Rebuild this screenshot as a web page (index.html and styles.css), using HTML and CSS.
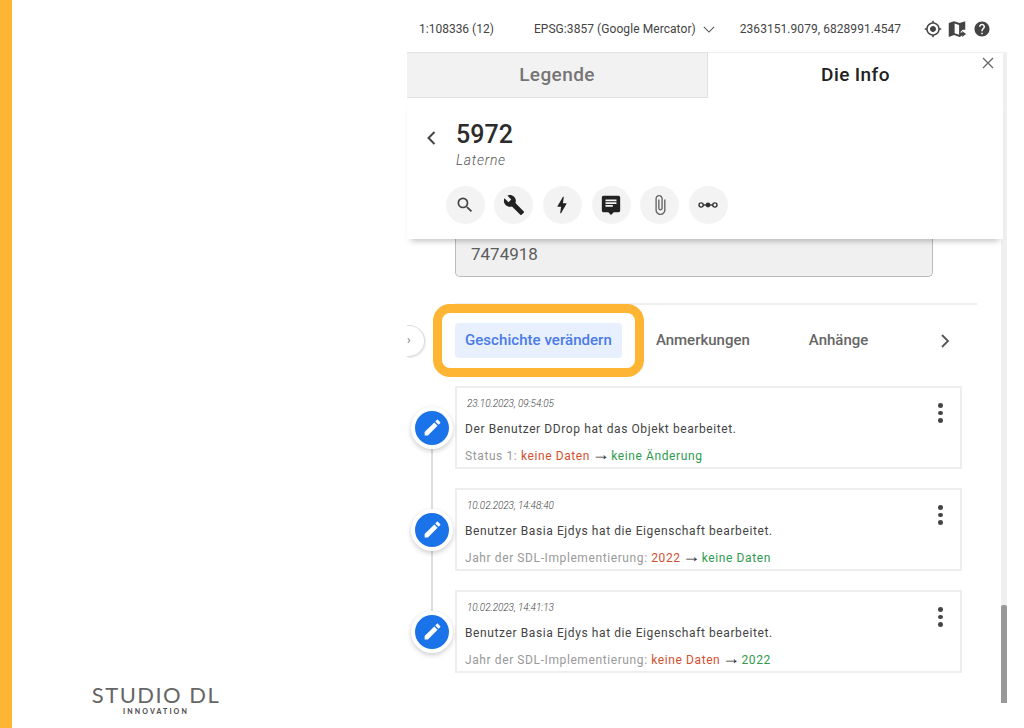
FILE: index.html
```html
<!DOCTYPE html>
<html lang="de">
<head>
<meta charset="utf-8">
<title>Geschichte verändern</title>
<link rel="stylesheet" href="styles.css">
</head>
<body>
<div class="page">
  <div class="stripe"></div>
  <div class="left">
    <div class="logo">
      <div class="logo-main">STUDIO DL</div>
      <div class="logo-sub">INNOVATION</div>
    </div>
  </div>
  <div class="right">
    <div class="status">
      <span class="scale">1:108336 (12)</span>
      <span class="crs">EPSG:3857 (Google Mercator)</span>
      <svg class="crs-chev" viewBox="0 0 14 8"><path d="M1 1l6 6 6-6" fill="none" stroke="#555" stroke-width="1.3"/></svg>
      <span class="coords">2363151.9079, 6828991.4547</span>
      <svg class="st-icon first" viewBox="0 0 24 24"><path d="M12 8c-2.21 0-4 1.79-4 4s1.79 4 4 4 4-1.79 4-4-1.79-4-4-4zm8.94 3c-.46-4.17-3.77-7.48-7.94-7.94V1h-2v2.06C6.83 3.52 3.52 6.83 3.06 11H1v2h2.06c.46 4.17 3.77 7.48 7.94 7.94V23h2v-2.06c4.17-.46 7.48-3.77 7.94-7.94H23v-2h-2.06zM12 19c-3.87 0-7-3.13-7-7s3.13-7 7-7 7 3.13 7 7-3.13 7-7 7z"/></svg>
      <svg class="st-icon map" viewBox="0 0 24 24"><path d="M1 4L8 1.500l7.500 2.500L23 1.500V13h-3.500l-3.500 3.500 2.500 0V21L15.500 22.500 8 20l-7 2.500zM8.800 4.500v13l6 2V6.500z" fill-rule="evenodd"/><path d="M19 14.500l5 4-5 4V20h-2.500v-3H19z"/></svg>
      <svg class="st-icon" viewBox="0 0 24 24"><path d="M12 2C6.48 2 2 6.480 2 12s4.480 10 10 10 10-4.480 10-10S17.520 2 12 2zm1 17h-2v-2h2v2zm2.070-7.750l-.9.92C13.450 12.900 13 13.500 13 15h-2v-.5c0-1.100.45-2.100 1.170-2.830l1.240-1.260c.37-.36.59-.86.59-1.410 0-1.100-.9-2-2-2s-2 .9-2 2H8c0-2.210 1.790-4 4-4s4 1.790 4 4c0 .88-.36 1.680-.93 2.250z"/></svg>
    </div>
    <div class="panel">
      <div class="panel-main">
        <div class="panel-tabs">
          <div class="ptab ptab-off">Legende</div>
          <div class="ptab ptab-on">Die Info</div>
          <svg class="close" viewBox="0 0 12 12"><path d="M1 1l10 10M11 1L1 11" stroke="#666" stroke-width="1.300" fill="none"/></svg>
        </div>
        <div class="head">
          <div class="head-top">
            <svg class="back" viewBox="0 0 10 16"><path d="M8.500 2L2.500 8l6 6" fill="none" stroke="#444" stroke-width="2"/></svg>
            <div>
              <div class="title">5972</div>
              <div class="subtitle">Laterne</div>
            </div>
          </div>
          <div class="actions">
            <div class="act"><svg class="i20" viewBox="0 0 24 24"><path fill="#444" d="M15.500 14h-.79l-.28-.27A6.470 6.470 0 0 0 16 9.500 6.500 6.500 0 1 0 9.500 16c1.610 0 3.090-.59 4.230-1.570l.27.28v.79l5 4.990L20.490 19l-4.990-5zm-6 0C7.010 14 5 11.990 5 9.500S7.010 5 9.500 5 14 7.010 14 9.500 11.990 14 9.500 14z"/></svg></div>
            <div class="act"><svg class="i22" viewBox="0 0 24 24"><path fill="#222" d="M22.700 19l-9.100-9.100c.9-2.300.4-5-1.500-6.900-2-2-5-2.400-7.400-1.300L9 6 6 9 1.600 4.700C.4 7.100.9 10.100 2.900 12.100c1.900 1.900 4.600 2.400 6.900 1.500l9.100 9.100c.4.4 1 .4 1.400 0l2.300-2.300c.5-.4.5-1.100.1-1.400z"/></svg></div>
            <div class="act"><svg class="i22" viewBox="0 0 24 24"><path fill="#222" d="M11 21h-1l1-7H7.500c-.88 0-.33-.75-.31-.78C8.480 10.940 10.420 7.540 13.010 3h1l-1 7h3.510c.4 0 .62.19.4.66C12.970 17.550 11 21 11 21z"/></svg></div>
            <div class="act"><svg class="i22" viewBox="0 0 24 24"><path fill="#222" d="M20 2H4c-1.100 0-1.990.9-1.990 2L2 18c0 1.100.9 2 2 2h5l3 3 3-3h5c1.100 0 2-.9 2-2V4c0-1.100-.9-2-2-2zM6 9h12v2H6V9zm8 5H6v-2h8v2zm4-6H6V6h12v2z"/></svg></div>
            <div class="act"><svg class="i22" viewBox="0 0 24 24"><path fill="#666" d="M16.500 6v11.500c0 2.210-1.790 4-4 4s-4-1.790-4-4V5c0-1.380 1.120-2.500 2.500-2.500s2.500 1.120 2.500 2.500v10.500c0 .55-.45 1-1 1s-1-.45-1-1V6H10v9.500c0 1.380 1.120 2.500 2.500 2.500s2.500-1.120 2.500-2.500V5c0-2.210-1.790-4-4-4S7 2.790 7 5v12.500c0 3.040 2.460 5.500 5.500 5.500s5.500-2.460 5.500-5.500V6h-1.500z"/></svg></div>
            <div class="act"><svg class="i22" viewBox="0 0 24 24"><path d="M5 12h14" stroke="#333" stroke-width="1.500"/><circle cx="4.500" cy="12" r="2.300" fill="#f3f3f3" stroke="#333" stroke-width="1.500"/><circle cx="12" cy="12" r="2.600" fill="#333"/><circle cx="19.500" cy="12" r="2.300" fill="#f3f3f3" stroke="#333" stroke-width="1.500"/></svg></div>
          </div>
        </div>
        <div class="field">7474918</div>
        <div class="divider"></div>
        <div class="tabs">
          <div class="toggle">›</div>
          <div class="tab tab-active">Geschichte verändern<span class="ring"></span></div>
          <div class="tab">Anmerkungen</div>
          <div class="tab tab-third">Anhänge</div>
          <svg class="next" viewBox="0 0 10 16"><path d="M2 2l6 6-6 6" fill="none" stroke="#555" stroke-width="1.800"/></svg>
        </div>
        <div class="timeline">
          <div class="entry">
            <div class="marker"><svg viewBox="0 0 24 24"><path fill="#fff" d="M3 17.250V21h3.750L17.810 9.940l-3.750-3.750L3 17.250zM20.710 7.040c.39-.39.39-1.020 0-1.410l-2.340-2.340c-.39-.39-1.020-.39-1.410 0l-1.830 1.830 3.750 3.750 1.830-1.830z"/></svg></div>
            <div class="card">
              <div class="date">23.10.2023, 09:54:05</div>
              <div class="msg">Der Benutzer DDrop hat das Objekt bearbeitet.</div>
              <div class="chg">Status 1: <span class="old">keine Daten</span> <span class="arrow">→</span> <span class="new">keine Änderung</span></div>
              <div class="dots"><i></i><i></i><i></i></div>
            </div>
          </div>
          <div class="entry">
            <div class="marker"><svg viewBox="0 0 24 24"><path fill="#fff" d="M3 17.250V21h3.750L17.810 9.940l-3.750-3.750L3 17.250zM20.710 7.040c.39-.39.39-1.020 0-1.410l-2.340-2.340c-.39-.39-1.020-.39-1.410 0l-1.830 1.830 3.750 3.750 1.830-1.830z"/></svg></div>
            <div class="card">
              <div class="date">10.02.2023, 14:48:40</div>
              <div class="msg">Benutzer Basia Ejdys hat die Eigenschaft bearbeitet.</div>
              <div class="chg">Jahr der SDL-Implementierung: <span class="old">2022</span> <span class="arrow">→</span> <span class="new">keine Daten</span></div>
              <div class="dots"><i></i><i></i><i></i></div>
            </div>
          </div>
          <div class="entry">
            <div class="marker"><svg viewBox="0 0 24 24"><path fill="#fff" d="M3 17.250V21h3.750L17.810 9.940l-3.750-3.750L3 17.250zM20.710 7.040c.39-.39.39-1.020 0-1.410l-2.340-2.340c-.39-.39-1.020-.39-1.410 0l-1.830 1.830 3.750 3.750 1.830-1.830z"/></svg></div>
            <div class="card">
              <div class="date">10.02.2023, 14:41:13</div>
              <div class="msg">Benutzer Basia Ejdys hat die Eigenschaft bearbeitet.</div>
              <div class="chg">Jahr der SDL-Implementierung: <span class="old">keine Daten</span> <span class="arrow">→</span> <span class="new">2022</span></div>
              <div class="dots"><i></i><i></i><i></i></div>
            </div>
          </div>
        </div>
      </div>
      <div class="scrollbar"><div class="thumb"></div></div>
    </div>
  </div>
</div>
</body>
</html>
```
FILE: styles.css
```css
* { box-sizing: border-box; }
html, body { margin: 0; padding: 0; background: #fff; }
body { font-family: Roboto, "Liberation Sans", sans-serif; color: #444; }
.page { display: flex; width: 1024px; height: 728px; overflow: hidden; }
.stripe { width: 12px; background: #ffb534; flex: none; }

.left { width: 395px; flex: none; display: flex; flex-direction: column; justify-content: flex-end; padding: 0 0 13px 80px; }
.logo { width: 128px; display: flex; flex-direction: column; align-items: center; color: #666; }
.logo-main { font-family: Lato, sans-serif; font-weight: 400; font-size: 22px; line-height: 22px; letter-spacing: 1.450px; white-space: nowrap; }
.logo-sub { font-family: Lato, sans-serif; font-weight: 900; font-size: 7px; line-height: 8px; letter-spacing: 2.100px; margin-top: 1px; color: #555; }

.right { width: 617px; flex: none; display: flex; flex-direction: column; }
.status { height: 52px; flex: none; display: flex; align-items: center; padding: 6px 0 0 12px; font-size: 12px; color: #444; white-space: nowrap; }
.crs { margin-left: 40px; letter-spacing: .07px; }
.crs-chev { width: 12px; height: 7px; margin-left: 7px; }
.coords { margin-left: 25px; letter-spacing: .05px; }
.st-icon { width: 18px; height: 18px; fill: #444; margin-left: 7px; }
.st-icon.first { margin-left: 23px; }
.st-icon.map { margin-left: 6px; }

.panel { width: 600px; height: 651px; flex: none; display: flex; }
.panel-main { width: 596px; flex: none; display: flex; flex-direction: column; }
.scrollbar { width: 6px; margin-left: -2px; background: #f0f0f0; display: flex; flex-direction: column; justify-content: flex-end; }
.thumb { height: 98px; background: #999; border-radius: 2px 2px 0 0; }

.panel-tabs { position: relative; display: flex; height: 46px; flex: none; font-size: 19px; font-weight: 500; letter-spacing: .4px; background: #fff; }
.ptab { display: flex; align-items: center; justify-content: center; padding-bottom: 2px; }
.ptab-off { width: 301px; background: #f2f2f2; color: #757575; border: 1px solid #e2e2e2; border-left: 0; }
.ptab-on { width: 295px; color: #222; border-top: 1px solid #eee; }
.close { position: absolute; top: 5px; right: 9px; width: 12px; height: 12px; }

.head { position: relative; z-index: 2; height: 141px; flex: none; background: #fff; box-shadow: 0 6px 6px -4px rgba(0,0,0,.25); padding-top: 22px; }
.head-top { display: flex; align-items: flex-start; padding-left: 19px; }
.back { width: 10px; height: 16px; margin: 10px 20px 0 0; }
.title { font-size: 25px; font-weight: 500; line-height: 30px; color: #2c2c2c; }
.subtitle { font-size: 14px; font-weight: 300; font-style: italic; line-height: 20px; color: #555; letter-spacing: .7px; }
.actions { display: flex; gap: 9.700px; margin: 16px 0 0 38.500px; }
.act { width: 39px; height: 38px; border-radius: 50%; background: #f3f3f3; display: flex; align-items: center; justify-content: center; }
.i20 { width: 20px; height: 20px; }
.i22 { width: 22px; height: 22px; }

.field { height: 38px; flex: none; margin-left: 48px; width: 478px; background: #f0f0f0; border: 1px solid #bbb; border-top: 0; border-radius: 0 0 5px 5px; padding: 5px 0 0 15px; font-size: 17px; line-height: 20px; color: #5c5c5c; }
.divider { height: 2px; flex: none; margin: 26px 0 0 48px; width: 522px; background: #eee; }

.tabs { display: flex; align-items: center; height: 35px; flex: none; margin-top: 18px; font-size: 15px; font-weight: 500; color: #666; }
.toggle { width: 18px; height: 32px; border-radius: 0 16px 16px 0; background: #fff; border: 1px solid #ddd; border-left: 0; box-shadow: 1px 1px 1px rgba(0,0,0,.08); font-size: 12px; line-height: 28px; color: #888; flex: none; margin-right: 30px; }
.tab { position: relative; height: 35px; line-height: 35px; padding: 0 10px; border-radius: 4px; white-space: nowrap; }
.tab + .tab { margin-left: 24px; }
.tab.tab-third { margin-left: 39px; }
.tab-active { background: #e8f0fe; color: #4a7be8; letter-spacing: .05px; }
.ring { position: absolute; top: -19px; right: -22px; bottom: -19px; left: -22px; border: 9px solid #ffb534; border-radius: 17px; pointer-events: none; }
.next { width: 10px; height: 16px; margin-left: 62px; }

.timeline { margin-top: 28px; display: flex; flex-direction: column; gap: 19px; }
.entry { position: relative; display: flex; align-items: center; height: 83px; }
.entry + .entry::before { content: ""; position: absolute; left: 24px; bottom: 41px; width: 2px; height: 102px; background: #ddd; }
.marker { position: relative; z-index: 1; width: 34px; height: 34px; margin: 0 6px 0 8px; flex: none; border-radius: 50%; background: #1a73e8; box-shadow: 0 0 0 4px #fff, 0 2px 5px 4px rgba(0,0,0,.2); display: flex; align-items: center; justify-content: center; }
.marker svg { width: 21px; height: 21px; }
.card { position: relative; width: 507px; height: 83px; border: 2px solid #eee; background: #fff; padding: 10px 0 0 8px; }
.date { font-size: 10px; font-style: italic; font-weight: 300; line-height: 12px; color: #444; margin-left: 2px; letter-spacing: -.08px; }
.msg { font-size: 12px; line-height: 16px; margin-top: 11px; color: #444; letter-spacing: .6px; }
.chg { font-size: 12px; line-height: 16px; margin-top: 11px; color: #999; letter-spacing: .6px; }
.old { color: #d2502f; }
.new { color: #2e9a4e; }
.arrow { color: #333; font-family: "Liberation Sans", sans-serif; font-size: 18px; line-height: 0; letter-spacing: 0; margin: 0 -2px; }
.dots { position: absolute; top: 15px; right: 17px; display: flex; flex-direction: column; gap: 3px; }
.dots i { width: 5px; height: 4.500px; border-radius: 50%; background: #444; display: block; }
```
